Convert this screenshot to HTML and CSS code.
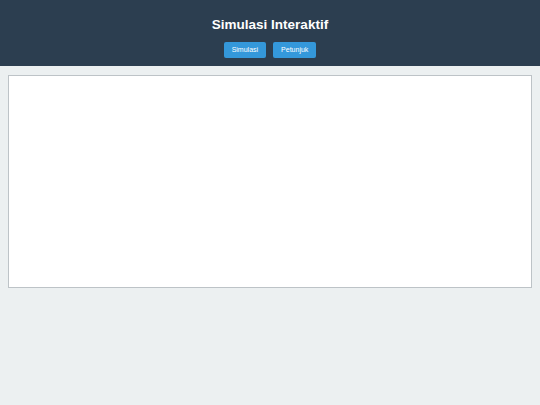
FILE: index.html
```
<!DOCTYPE html>
<html lang="id">
<head>
<meta charset="utf-8">
<title>Simulasi Interaktif</title>
<link rel="stylesheet" href="styles.css">
</head>
<body>
<header class="header">
  <h1 class="title">Simulasi Interaktif</h1>
  <nav class="nav">
    <button class="btn">Simulasi</button>
    <button class="btn">Petunjuk</button>
  </nav>
</header>
<main class="main">
  <div class="canvas"></div>
</main>
</body>
</html>
```
FILE: styles.css
```
html, body {
  margin: 0;
  padding: 0;
  background: #ecf0f1;
  font-family: "Liberation Sans", Arial, sans-serif;
}
.header {
  background: #2c3e50;
  color: #fff;
  height: 66px;
  box-sizing: border-box;
  padding-top: 15px;
  display: flex;
  flex-direction: column;
  align-items: center;
}
.title {
  margin: 0;
  font-size: 13.5px;
  line-height: 20px;
  font-weight: bold;
}
.nav {
  display: flex;
  gap: 7px;
  margin-top: 7px;
}
.btn {
  background: #3498db;
  color: #fff;
  border: none;
  border-radius: 2px;
  font-family: "Liberation Sans", Arial, sans-serif;
  font-size: 7px;
  line-height: 8px;
  height: 16px;
  padding: 0 8px;
  margin: 0;
}
.main {
  padding: 9px 8px;
}
.canvas {
  background: #fff;
  border: 1px solid #bdc3c7;
  height: 211px;
}
```
